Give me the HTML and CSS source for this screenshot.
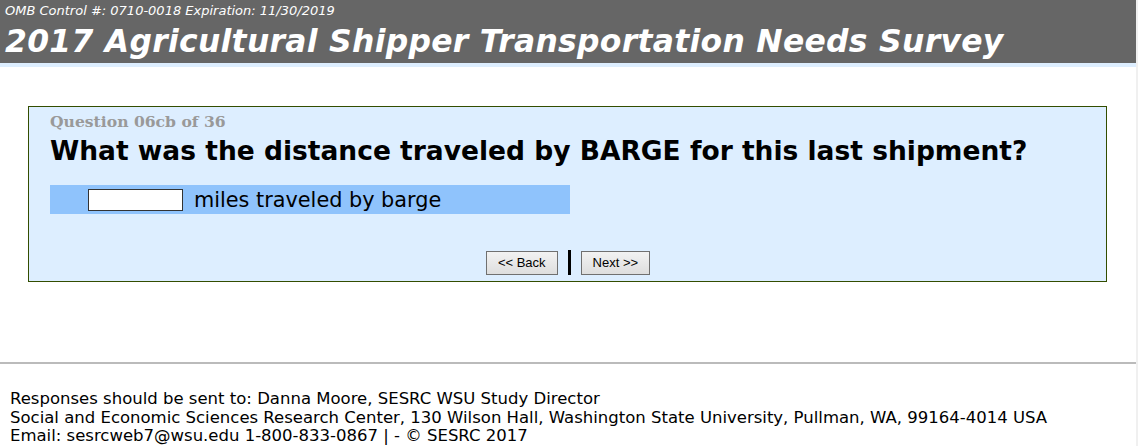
FILE: index.html
```html
<!DOCTYPE html>
<html>
<head>
<meta charset="utf-8">
<link rel="stylesheet" href="styles.css">
</head>
<body>
<div class="page">
  <header class="header">
    <div class="omb">OMB Control #: 0710-0018 Expiration: 11/30/2019</div>
    <h1 class="title">2017 Agricultural Shipper Transportation Needs Survey</h1>
  </header>
  <div class="strip"></div>
  <main class="main">
    <div class="qbox">
      <div class="qnum">Question 06cb of 36</div>
      <div class="qtext">What was the distance traveled by BARGE for this last shipment?</div>
      <div class="answer">
        <input class="field" type="text">
        <span class="alabel">miles traveled by barge</span>
      </div>
      <div class="nav">
        <button class="btn">&lt;&lt; Back</button>
        <span class="sep"></span>
        <button class="btn">Next &gt;&gt;</button>
      </div>
    </div>
  </main>
  <hr class="rule">
  <footer class="footer">
    <div>Responses should be sent to: Danna Moore, SESRC WSU Study Director</div>
    <div>Social and Economic Sciences Research Center, 130 Wilson Hall, Washington State University, Pullman, WA, 99164-4014 USA</div>
    <div>Email: sesrcweb7@wsu.edu 1-800-833-0867 | - © SESRC 2017</div>
  </footer>
</div>
</body>
</html>
```
FILE: styles.css
```css
html, body { margin: 0; padding: 0; background: #fff; }
body { font-family: "DejaVu Sans", Verdana, sans-serif; color: #000; }
.page { width: 1136px; border-right: 2px solid #f0f0f0; min-height: 446px; }
.header { background: #666; color: #fff; padding: 3px 0 0 5px; height: 63px; box-sizing: border-box; }
.omb { font-size: 13px; font-style: italic; line-height: 16px; }
.title { margin: 0; font-size: 31.4px; font-style: italic; font-weight: bold; line-height: 44px; letter-spacing: 0.3px; }
.strip { height: 4px; background: #ddeeff; }
.main { padding: 39px 29px 0 28px; }
.qbox { background: #ddeeff; border: 1px solid #334d00; padding: 5px 20px 7px 21px; height: 176px; box-sizing: border-box; }
.qnum { color: #999; font-family: "DejaVu Serif", Georgia, serif; font-weight: bold; font-size: 15.6px; line-height: 20px; }
.qtext { font-weight: bold; font-size: 26.5px; line-height: 36px; margin-top: 1px; }
.answer { margin-top: 16px; width: 520px; height: 29px; background: #8fc3fc; display: flex; align-items: center; padding-left: 38px; box-sizing: border-box; }
.field { width: 95px; height: 22px; box-sizing: border-box; border: 1px solid #333; background: #fff; padding: 0; margin: 0; }
.alabel { font-size: 20.8px; margin-left: 11px; }
.nav { display: flex; justify-content: center; align-items: center; gap: 10px; margin-top: 36px; }
.btn { font-family: "Liberation Sans", Arial, sans-serif; font-size: 13px; height: 24px; padding: 0 11px; background: linear-gradient(#f2f2f2, #dedede); border: 1px solid #707070; color: #000; }
.sep { width: 3px; height: 25px; background: #000; }
.rule { margin: 80px 0 0 0; border: 0; border-top: 2px solid #bbb; height: 0; }
.footer { padding: 26px 0 0 10px; font-size: 16.5px; line-height: 18.5px; }
```
